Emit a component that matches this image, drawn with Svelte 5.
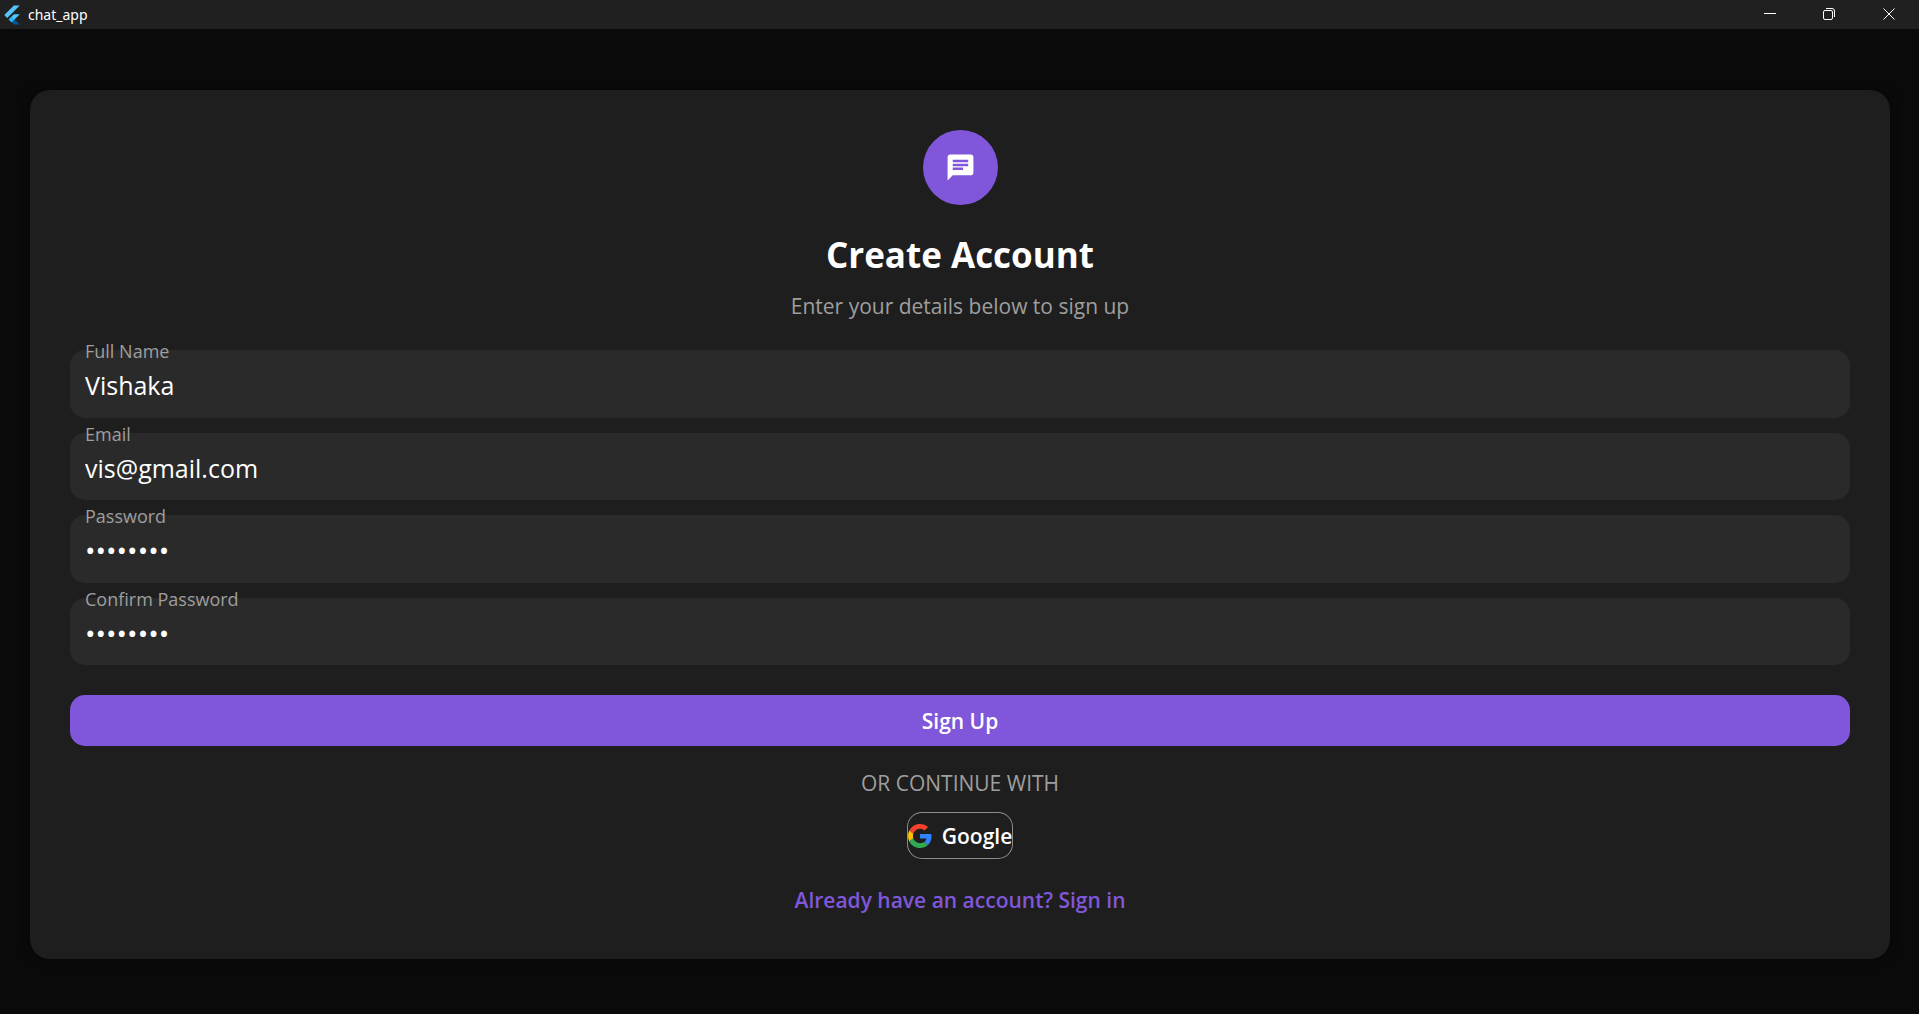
<script>
  let fields = $state([
    { id: 'name', label: 'Full Name', type: 'text', value: 'Vishaka' },
    { id: 'email', label: 'Email', type: 'email', value: 'vis@gmail.com' },
    { id: 'password', label: 'Password', type: 'password', value: 'password' },
    { id: 'confirm', label: 'Confirm Password', type: 'password', value: 'password' }
  ]);
</script>

<div class="window">
  <header class="titlebar">
    <svg class="flutter" viewBox="2 0 20 24" aria-hidden="true">
      <path fill="#54c5f8" d="M14.3 0 2.3 12 6 15.7 21.7 0z" />
      <path fill="#54c5f8" d="M14.3 11.1 7.9 17.5l3.7 3.7 10.1-10.1z" />
      <path fill="#01579b" d="m11.6 21.2 2.7 2.8h7.4l-6.4-6.5z" />
      <path fill="#29b6f6" d="m7.9 17.5 3.7-3.7 3.7 3.7-3.7 3.7z" />
    </svg>
    <span class="app-name">chat_app</span>
    <div class="controls">
      <button type="button" aria-label="Minimize">
        <svg viewBox="0 0 12 12"><path d="M0 5.5h12" /></svg>
      </button>
      <button type="button" aria-label="Restore">
        <svg viewBox="0 0 12 12">
          <rect x=".5" y="2.5" width="9" height="9" rx="1.5" />
          <path d="M3 .5h6a2.5 2.5 0 0 1 2.5 2.5v6" />
        </svg>
      </button>
      <button type="button" aria-label="Close">
        <svg viewBox="0 0 12 12"><path d="m.5.5 11 11m0-11-11 11" /></svg>
      </button>
    </div>
  </header>

  <main>
    <form class="card" onsubmit={(e) => e.preventDefault()}>
      <div class="badge">
        <svg viewBox="0 0 24 24" aria-hidden="true">
          <path d="M20 2H4c-1.1 0-1.99.9-1.99 2L2 22l4-4h14c1.1 0 2-.9 2-2V4c0-1.1-.9-2-2-2zM6 9h12v2H6V9zm8 5H6v-2h8v2zm4-6H6V6h12v2z" />
        </svg>
      </div>
      <h1>Create Account</h1>
      <p class="subtitle">Enter your details below to sign up</p>

      <div class="fields">
        {#each fields as field (field.id)}
          <div class="field">
            <label for={field.id}>{field.label}</label>
            <input id={field.id} type={field.type} bind:value={field.value} autocomplete="off" />
          </div>
        {/each}
      </div>

      <button class="primary" type="submit">Sign Up</button>
      <p class="divider">OR CONTINUE WITH</p>
      <button class="google" type="button">
        <svg viewBox="0 0 48 48" aria-hidden="true">
          <path fill="#f4432c" d="M24 9.500c3.500 0 6.700 1.200 9.200 3.600l6.900-6.900C35.900 2.400 30.500 0 24 0 14.600 0 6.500 5.400 2.600 13.200l8 6.200C12.400 13.700 17.700 9.500 24 9.500z" />
          <path fill="#3083ff" d="M47 24.500c0-1.600-.2-3.100-.4-4.500H24v9h12.900c-.6 3-2.200 5.500-4.700 7.200l7.700 6C44.400 38 47 31.800 47 24.500z" />
          <path fill="#ffc107" d="M10.500 28.600A14.500 14.500 0 0 1 9.800 24c0-1.600.3-3.100.8-4.600l-8-6.200A24 24 0 0 0 0 24c0 3.900.9 7.500 2.600 10.800z" />
          <path fill="#30a952" d="M24 48c6.500 0 11.900-2.100 15.900-5.800l-7.700-6c-2.200 1.400-4.900 2.300-8.200 2.300-6.300 0-11.600-4.200-13.500-9.900l-7.900 6.200C6.500 42.600 14.600 48 24 48z" />
        </svg>
        <span>Google</span>
      </button>
      <a class="signin" href="#signin">Already have an account? Sign in</a>
    </form>
  </main>
</div>

<style>
  :global(body) {
    margin: 0;
    background: #0a0a0a;
  }

  .window {
    min-height: 100vh;
    display: flex;
    flex-direction: column;
    font-family: 'Open Sans', 'Noto Sans', sans-serif;
    color: #fff;
  }

  button,
  input {
    font: inherit;
    color: inherit;
    border: 0;
    margin: 0;
    padding: 0;
    background: none;
  }

  .titlebar {
    display: flex;
    align-items: center;
    height: 29px;
    padding-left: 4px;
    background: #202020;
  }

  .flutter {
    width: 16px;
    height: 20px;
  }

  .app-name {
    margin-left: 8px;
    font-family: 'Noto Sans', sans-serif;
    font-size: 14px;
    line-height: 20px;
  }

  .controls {
    display: flex;
    align-self: stretch;
    margin-left: auto;
  }

  .controls button {
    display: grid;
    place-items: center;
    width: 59px;
    padding-bottom: 1px;
  }

  .controls button:last-child {
    width: 61px;
  }

  .controls svg {
    width: 12px;
    height: 12px;
    fill: none;
    stroke: #fff;
  }

  main {
    flex: 1;
    display: flex;
    flex-direction: column;
    justify-content: center;
    padding: 6px 29px 0 30px;
  }

  .card {
    display: flex;
    flex-direction: column;
    align-items: center;
    padding: 40px 40px 43px;
    border-radius: 20px;
    background: #1e1e1e;
    box-shadow: 0 0 10px rgba(0, 0, 0, 0.4);
  }

  .badge {
    display: grid;
    place-items: center;
    width: 75px;
    height: 75px;
    border-radius: 50%;
    background: #8057da;
  }

  .badge svg {
    width: 31px;
    height: 31px;
    fill: #fff;
  }

  h1,
  p {
    margin: 0;
    font-weight: 400;
  }

  h1 {
    margin-top: 25px;
    font-size: 35px;
    font-weight: 700;
    line-height: 50px;
  }

  .subtitle {
    margin-top: 10px;
    color: #9e9e9e;
    font-size: 21px;
    line-height: 32px;
  }

  .fields {
    display: grid;
    grid-auto-rows: 1fr;
    gap: 15px;
    align-self: stretch;
    min-height: 315px;
    margin-top: 28px;
  }

  .field {
    position: relative;
    display: flex;
    border-radius: 15px;
    background: #2a2a2a;
  }

  .field label {
    position: absolute;
    top: -12px;
    left: 15px;
    color: #9e9e9e;
    font-size: 18px;
    line-height: 26px;
  }

  .field input {
    flex: 1;
    min-width: 0;
    padding: 3px 15px 0;
    border-radius: 15px;
    font-size: 25px;
    outline: none;
  }

  .field input[type='password'] {
    font-size: 28px;
  }

  .primary {
    align-self: stretch;
    height: 51px;
    margin-top: 30px;
    border-radius: 15px;
    background: #8057da;
    font-size: 21px;
    font-weight: 600;
    line-height: 32px;
  }

  .divider {
    margin-top: 21px;
    color: #9e9e9e;
    font-size: 21px;
    line-height: 32px;
  }

  .google {
    display: flex;
    align-items: center;
    gap: 10px;
    height: 47px;
    margin-top: 13px;
    padding: 0 1px;
    border-radius: 15px;
    box-shadow: inset 0 0 0 1px #8c8c8c;
    font-size: 21px;
    font-weight: 600;
  }

  .google svg {
    width: 24px;
    height: 24px;
  }

  .signin {
    margin-top: 25px;
    color: #8057da;
    font-size: 21px;
    font-weight: 600;
    line-height: 32px;
    text-decoration: none;
  }
</style>
